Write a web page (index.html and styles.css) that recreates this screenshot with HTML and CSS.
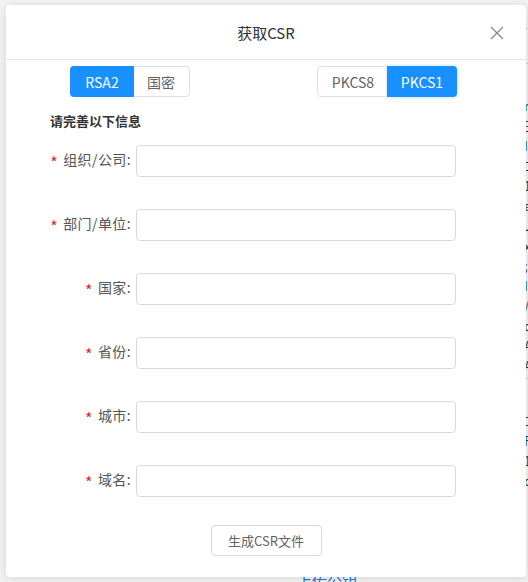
FILE: index.html
```html
<!DOCTYPE html>
<html lang="zh-CN">
<head>
<meta charset="utf-8">
<title>获取CSR</title>
<link rel="stylesheet" href="styles.css">
</head>
<body>
<div class="page">
  <div class="page-lines">
    <div class="rule"></div>
    <div class="rule"></div>
    <p>m</p><p>三</p><p>I</p><p>二</p><p>1</p><p>e</p><p>J</p><p>x</p><p>;</p><p>I</p><p>/</p><p>c</p><p>A</p><p>A</p>
    <div class="rule"></div>
    <p>二</p><p>F</p><p>1</p><p>c</p>
  </div>
  <a class="page-link" href="#">上传公钥</a>
</div>

<div class="dialog">
  <div class="dialog-header">
    <span class="dialog-title">获取CSR</span>
    <svg class="close" width="14" height="14" viewBox="0 0 14 14"><path d="M1 1 L13 13 M13 1 L1 13" stroke="#8c8c8c" stroke-width="1.4" fill="none"/></svg>
  </div>
  <div class="dialog-body">
    <div class="toggles">
      <div class="seg">
        <span class="seg-item active w64">RSA2</span>
        <span class="seg-item w57">国密</span>
      </div>
      <div class="seg">
        <span class="seg-item w70">PKCS8</span>
        <span class="seg-item active focus w70">PKCS1</span>
      </div>
    </div>
    <div class="section-title">请完善以下信息</div>
    <div class="form">
      <div class="row"><label class="label"><span class="req">*</span>组织/公司:</label><input class="input" type="text"></div>
      <div class="row"><label class="label"><span class="req">*</span>部门/单位:</label><input class="input" type="text"></div>
      <div class="row"><label class="label"><span class="req">*</span>国家:</label><input class="input" type="text"></div>
      <div class="row"><label class="label"><span class="req">*</span>省份:</label><input class="input" type="text"></div>
      <div class="row"><label class="label"><span class="req">*</span>城市:</label><input class="input" type="text"></div>
      <div class="row"><label class="label"><span class="req">*</span>域名:</label><input class="input" type="text"></div>
    </div>
    <div class="actions">
      <button class="btn" type="button">生成CSR文件</button>
    </div>
  </div>
</div>
</body>
</html>
```

FILE: styles.css
```css
* { box-sizing: border-box; }
html, body { margin: 0; padding: 0; }
body {
  width: 528px;
  height: 582px;
  overflow: hidden;
  background: #f2f2f2;
  font-family: "Noto Sans CJK SC", "Noto Sans", sans-serif;
  position: relative;
}
.page {
  width: 528px;
  height: 582px;
  position: relative;
}
.page-lines {
  padding: 28px 0 0 524px;
  font-size: 13px;
  line-height: 16px;
  color: #333;
}
.page-lines p { margin: 0 0 4px; }
.page-lines .rule { height: 1px; background: #ccc; margin: 0 0 34px; }
.page-link {
  position: absolute;
  left: 297px;
  top: 570px;
  font-size: 15px;
  line-height: 22px;
  color: #2f6fd6;
  text-decoration: none;
}
.dialog {
  position: absolute;
  left: 6px;
  top: 5px;
  width: 520px;
  height: 572px;
  background: #fff;
  border-radius: 4px;
  box-shadow: 0 1px 8px rgba(0,0,0,0.12);
}
.dialog-header {
  height: 55px;
  border-bottom: 1px solid #e6e6e6;
  display: flex;
  align-items: center;
  justify-content: center;
  position: relative;
}
.dialog-title {
  font-size: 15px;
  color: #303133;
}
.close {
  position: absolute;
  right: 22px;
  top: 21px;
}
.dialog-body {
  padding: 6px 0 0;
}
.toggles {
  display: flex;
  justify-content: space-between;
  padding: 0 69px 0 64px;
}
.seg {
  display: flex;
  height: 31px;
  border: 1px solid #dcdfe6;
  border-radius: 4px;
}
.seg-item {
  display: flex;
  align-items: center;
  justify-content: center;
  font-size: 14px;
  color: #606266;
}
.seg-item.active {
  background: #1890ff;
  color: #fff;
  margin: -1px;
  border-radius: 4px 0 0 4px;
}
.seg .seg-item.active:last-child { border-radius: 0 4px 4px 0; }
.seg-item.focus { box-shadow: 0 0 0 2px #eaf4ff; }
.w64 { width: 64px; }
.w57 { width: 56px; }
.w70 { width: 70px; }
.section-title {
  margin: 14px 0 0 44px;
  font-size: 13px;
  line-height: 20px;
  font-weight: bold;
  color: #333;
}
.form {
  margin-top: 14px;
  display: flex;
  flex-direction: column;
  gap: 32px;
}
.row {
  display: flex;
  align-items: center;
}
.label {
  width: 130px;
  text-align: right;
  padding-right: 5px;
  font-size: 14px;
  color: #555;
  letter-spacing: 0.4px;
}
.req {
  color: #f5222d;
  font-size: 16px;
  margin-right: 5px;
  vertical-align: -4px;
}
.input {
  width: 320px;
  height: 32px;
  border: 1px solid #d9d9d9;
  border-radius: 4px;
  background: #fff;
  outline: none;
}
.actions {
  display: flex;
  justify-content: center;
  margin-top: 28px;
}
.btn {
  width: 111px;
  height: 31px;
  border: 1px solid #d9d9d9;
  border-radius: 4px;
  background: #fff;
  font-family: inherit;
  font-size: 13px;
  color: #606266;
  padding: 0;
}
```
